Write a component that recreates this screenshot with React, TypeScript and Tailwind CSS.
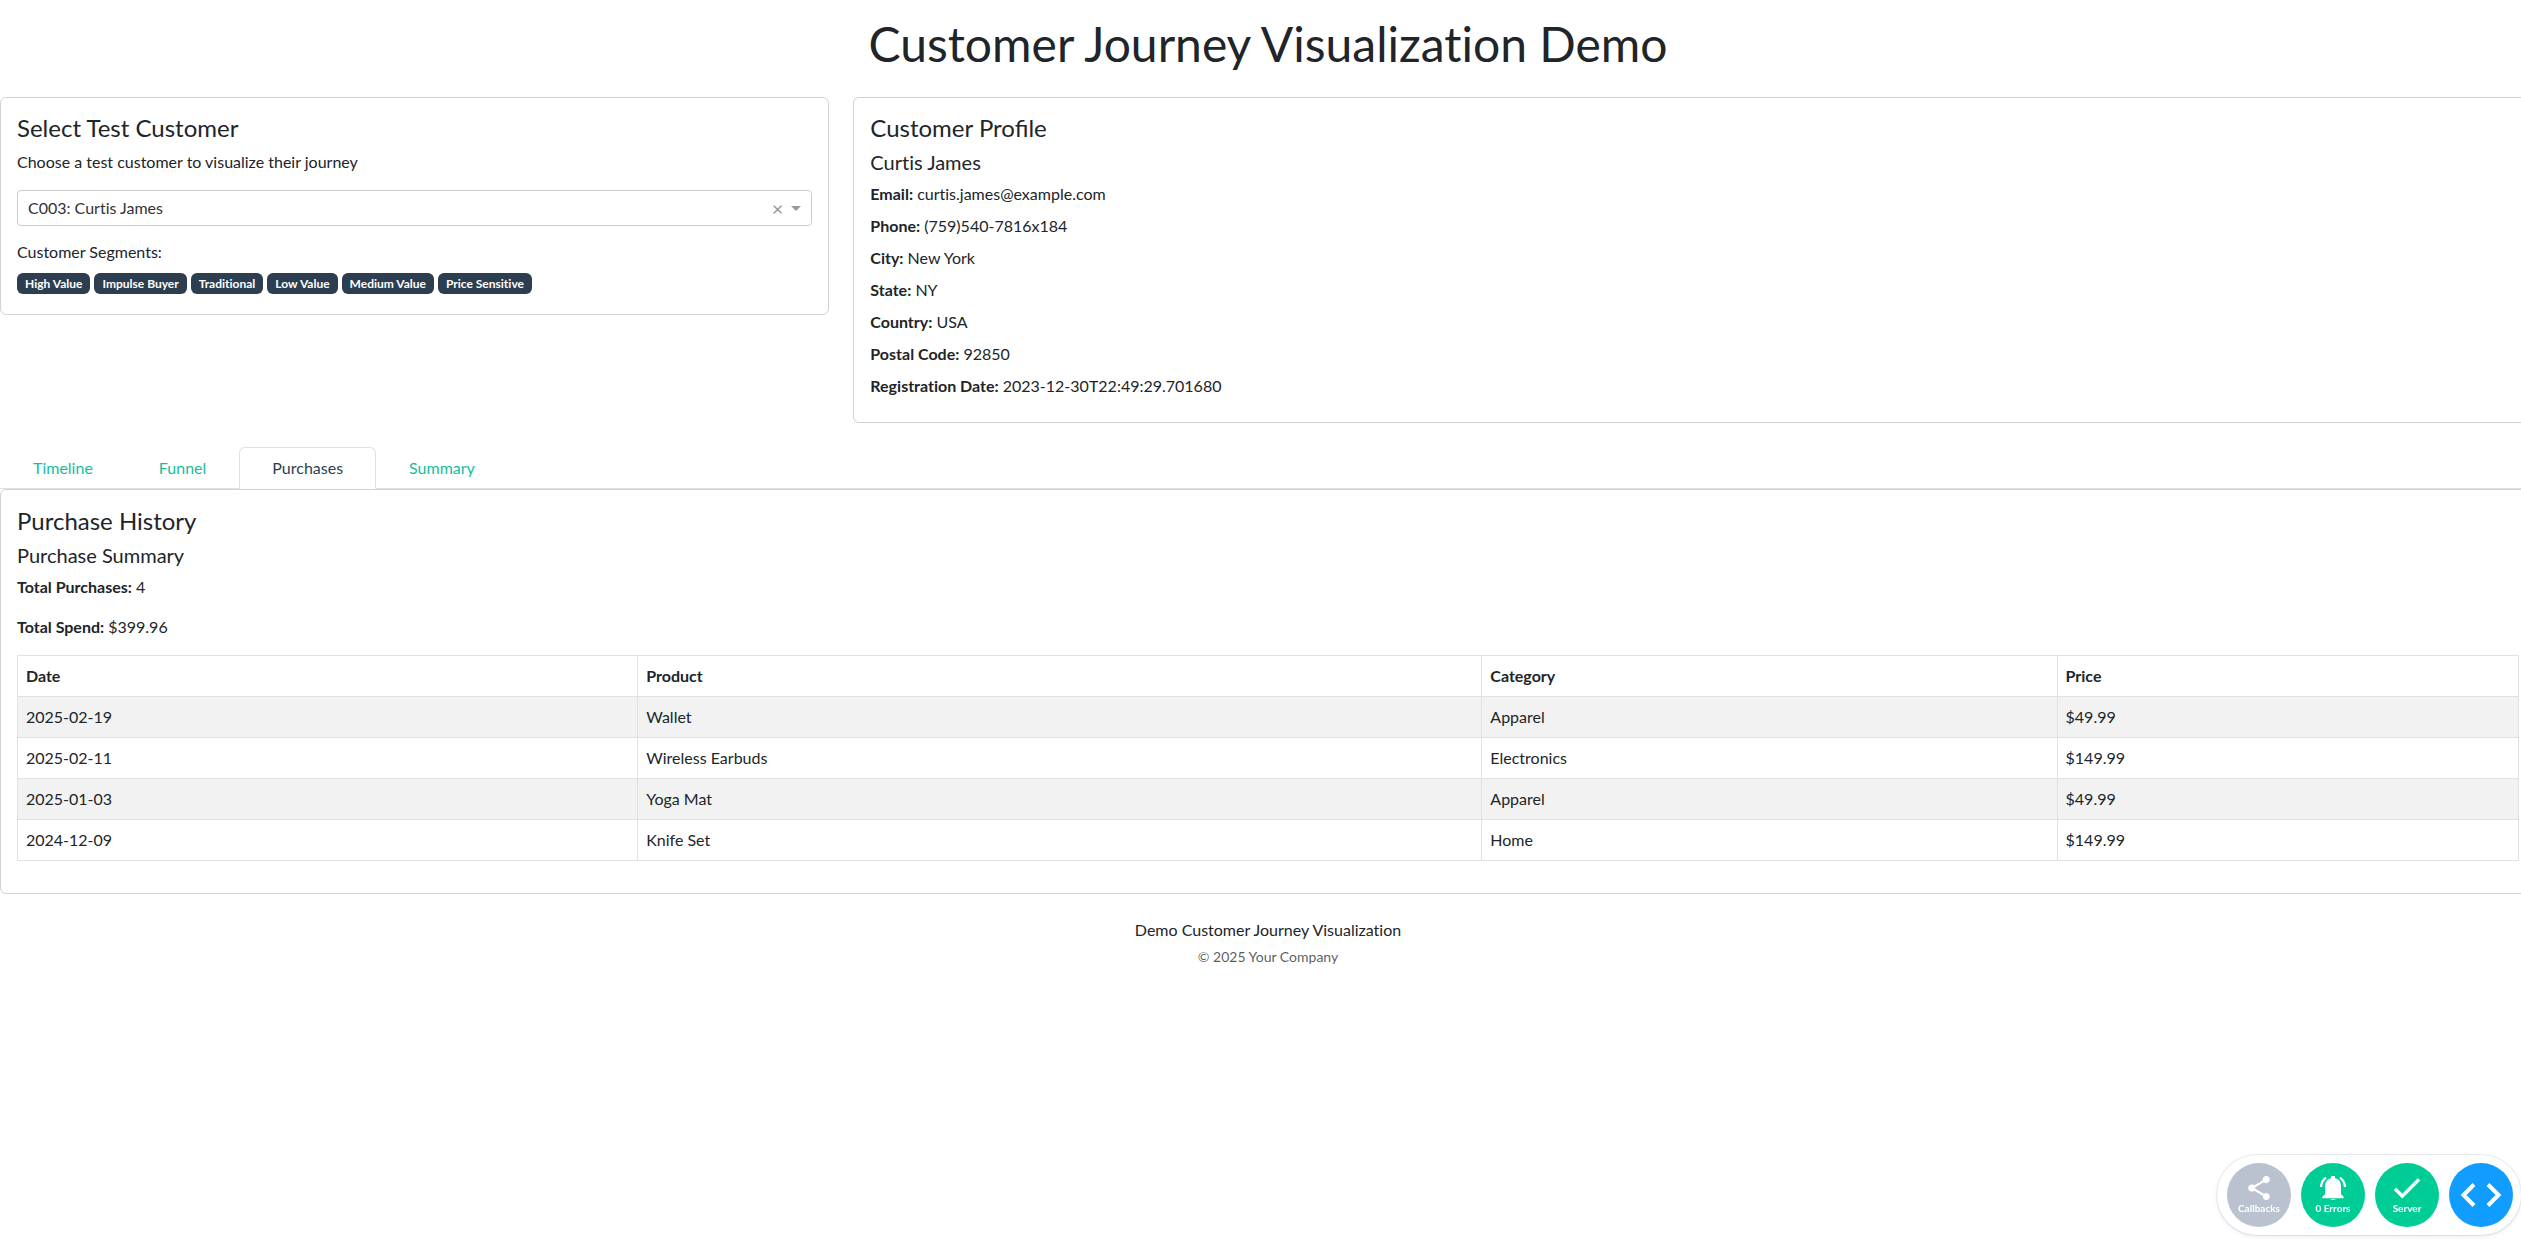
import { ReactNode } from "react";

const card = "rounded-md border border-[#d2d2d2] bg-white p-4";

const segments = ["High Value", "Impulse Buyer", "Traditional", "Low Value", "Medium Value", "Price Sensitive"];

const profile = [
  ["Email:", "curtis.james@example.com"],
  ["Phone:", "(759)540-7816x184"],
  ["City:", "New York"],
  ["State:", "NY"],
  ["Country:", "USA"],
  ["Postal Code:", "92850"],
  ["Registration Date:", "2023-12-30T22:49:29.701680"],
];

const tabs = ["Timeline", "Funnel", "Purchases", "Summary"];

const columns = [
  { name: "Date", width: "w-[24.8%]" },
  { name: "Product", width: "w-[33.75%]" },
  { name: "Category", width: "w-[23%]" },
  { name: "Price", width: "w-[18.45%]" },
];

const purchases = [
  ["2025-02-19", "Wallet", "Apparel", "$49.99"],
  ["2025-02-11", "Wireless Earbuds", "Electronics", "$149.99"],
  ["2025-01-03", "Yoga Mat", "Apparel", "$49.99"],
  ["2024-12-09", "Knife Set", "Home", "$149.99"],
];

function CustomerPicker() {
  return (
    <section className={card}>
      <h4 className="mb-2 text-2xl leading-7">Select Test Customer</h4>
      <label htmlFor="customer" className="mb-4 block">
        Choose a test customer to visualize their journey
      </label>
      <div className="relative mb-4">
        <select
          id="customer"
          className="block h-9 w-full appearance-none rounded border border-[#ccc] bg-white px-[10px] text-base text-[#333]"
        >
          <option>C003: Curtis James</option>
        </select>
        <div className="absolute inset-y-0 right-[11px] flex items-center gap-2">
          <button type="button" aria-label="Clear value" className="text-xl leading-none text-[#999]">
            ×
          </button>
          <span className="border-x-5 border-t-5 border-x-transparent border-t-[#999]" />
        </div>
      </div>
      <h6 className="mb-2 leading-5">Customer Segments:</h6>
      <div className="mb-1 flex flex-wrap gap-1 pt-[3px]">
        {segments.map((s) => (
          <span key={s} className="rounded-md bg-[#2c3e50] px-2 py-1 text-xs leading-[13px] font-bold text-white">
            {s}
          </span>
        ))}
      </div>
    </section>
  );
}

function CustomerProfile() {
  return (
    <section className={card}>
      <h4 className="mb-2 text-2xl leading-7 [font-variant-ligatures:normal]">Customer Profile</h4>
      <h5 className="mb-2 text-xl leading-6">Curtis James</h5>
      {profile.map(([label, value]) => (
        <p key={label} className="mb-2">
          <strong>{label}</strong> {value}
        </p>
      ))}
    </section>
  );
}

function Tabs() {
  return (
    <div role="tablist" className="flex border-b border-[#dee2e6]">
      {tabs.map((t) => (
        <button
          key={t}
          type="button"
          role="tab"
          aria-selected={t === "Purchases"}
          className={
            t === "Purchases"
              ? "-mb-px rounded-t-md border border-[#dee2e6] border-b-white bg-white px-8 py-2 text-[#2c3e50]"
              : "-mb-px border border-transparent px-8 py-2 text-[#18bc9c]"
          }
        >
          {t}
        </button>
      ))}
    </div>
  );
}

function Purchases() {
  return (
    <section className={card}>
      <h4 className="mb-2 text-2xl leading-[29px]">Purchase History</h4>
      <h5 className="mb-2 text-xl leading-6">Purchase Summary</h5>
      <p className="mb-4">
        <strong>Total Purchases:</strong> 4
      </p>
      <p className="mb-4">
        <strong>Total Spend:</strong> $399.96
      </p>
      <table className="mb-4 w-full border-collapse text-left [font-variant-ligatures:normal]">
        <thead>
          <tr>
            {columns.map(({ name, width }) => (
              <th key={name} className={`border border-[#dee2e6] p-2 font-bold ${width}`}>
                {name}
              </th>
            ))}
          </tr>
        </thead>
        <tbody>
          {purchases.map((row) => (
            <tr key={row[0]} className="odd:bg-[#f2f2f2]">
              {row.map((cell, i) => (
                <td key={i} className="border border-[#dee2e6] p-2">
                  {cell}
                </td>
              ))}
            </tr>
          ))}
        </tbody>
      </table>
    </section>
  );
}

function DebugButton({ label, color, children }: { label?: string; color: string; children: ReactNode }) {
  return (
    <button
      type="button"
      aria-label={label ?? "Toggle debug menu"}
      className={`flex size-16 flex-col items-center justify-center rounded-full text-white ${color}`}
    >
      {children}
      {label && <span className="mb-0.5 text-[10px] leading-3 font-bold">{label}</span>}
    </button>
  );
}

function DebugMenu() {
  return (
    <div className="fixed right-0 bottom-[7px] flex gap-[10px] rounded-full bg-white py-2 pr-2 pl-[10px] font-['Lato',sans-serif] shadow-[0_0_1px_1px_rgba(0,0,0,0.08),0_2px_4px_rgba(80,103,132,0.12)]">
      <DebugButton label="Callbacks" color="bg-[#b9c2ce]">
        <svg viewBox="0.4 0.4 23.2 23.2" className="size-7" fill="currentColor">
          <path d="M18 16.08c-.76 0-1.44.3-1.96.77L8.91 12.7c.05-.23.09-.46.09-.7s-.04-.47-.09-.7l7.05-4.11c.54.5 1.25.81 2.04.81 1.66 0 3-1.34 3-3s-1.34-3-3-3-3 1.34-3 3c0 .24.04.47.09.7L8.04 9.81C7.5 9.31 6.79 9 6 9c-1.66 0-3 1.34-3 3s1.34 3 3 3c.79 0 1.5-.31 2.04-.81l7.12 4.16c-.05.21-.08.43-.08.65 0 1.61 1.31 2.92 2.92 2.92s2.92-1.31 2.92-2.92-1.31-2.92-2.92-2.92z" />
        </svg>
      </DebugButton>
      <DebugButton label="0 Errors" color="bg-[#00cc96]">
        <svg viewBox="0 0 28 28" className="size-7" fill="currentColor">
          <path d="M12 2h4v2.3c4 .8 6 4 6 8v8l2.7 2.5v1.5H3.3v-1.5L6 20.3v-8c0-4 2-7.2 6-8z" />
          <path d="M11.5 25h5c-.6 1.2-4.4 1.2-5 0z" />
          <path d="M2 13C2.2 9 4 5.8 7 3.6M26 13C25.8 9 24 5.8 21 3.6" fill="none" stroke="currentColor" strokeWidth="2.2" />
        </svg>
      </DebugButton>
      <DebugButton label="Server" color="bg-[#00cc96]">
        <svg viewBox="2.7 2.6 19 19" className="size-7" fill="currentColor">
          <path d="M9 16.17L4.83 12l-1.42 1.41L9 19 21 7l-1.41-1.41z" stroke="currentColor" strokeWidth="0.4" />
        </svg>
      </DebugButton>
      <DebugButton color="bg-[#119dff]">
        <svg viewBox="0 0 42 24" className="h-6 w-[42px]" fill="none" stroke="currentColor" strokeWidth="4">
          <path d="M14 1.5L3.5 12L14 22.5M28 1.5L38.5 12L28 22.5" />
        </svg>
      </DebugButton>
    </div>
  );
}

export default function App() {
  return (
    <>
      <div className="overflow-x-hidden bg-white font-['Lato',sans-serif] text-base leading-6 text-[#212529] [font-variant-ligatures:none]">
        <div className="w-[calc(100%+15px)] pt-[15px]">
          <h1 className="mb-[25px] text-center text-5xl leading-[57px]">Customer Journey Visualization Demo</h1>
          <div className="mb-6 grid grid-cols-3 items-start gap-6">
            <CustomerPicker />
            <div className="col-span-2">
              <CustomerProfile />
            </div>
          </div>
          <Tabs />
          <Purchases />
          <footer className="mt-6 text-center">
            <p className="mb-1">Demo Customer Journey Visualization</p>
            <p className="text-sm leading-[22px] text-[#212529]/75">© 2025 Your Company</p>
          </footer>
        </div>
      </div>
      <DebugMenu />
    </>
  );
}
